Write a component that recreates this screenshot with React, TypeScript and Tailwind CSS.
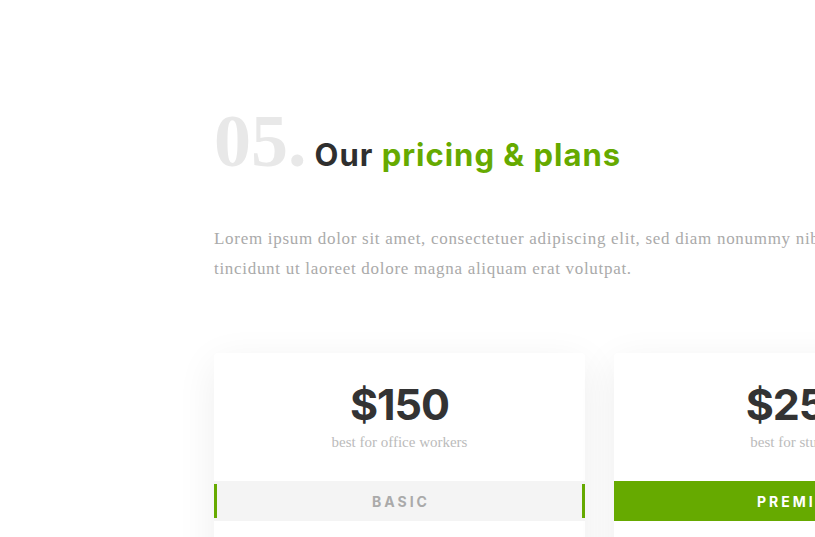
const plans = [
  { price: '$150', note: 'best for office workers', name: 'BASIC', featured: false },
  { price: '$250', note: 'best for students', name: 'PREMIUM', featured: true },
];

const sans = { fontFamily: 'Inter, "Noto Sans", sans-serif' };
const serif = { fontFamily: '"Liberation Serif", serif' };

export default function App() {
  return (
    <div className="w-[815px] h-[537px] overflow-hidden bg-white">
      <div className="w-[1200px] pl-[214px] pt-[104px]">
        <div className="flex items-baseline h-[74px]">
          <span className="text-[74px] leading-none text-[#e8e8e8] font-bold" style={serif}>
            05.
          </span>
          <h2 className="ml-[8px] text-[31px] font-bold tracking-[1px] text-[#2f2f2f]" style={sans}>
            Our <span className="text-[#66aa00]">pricing &amp; plans</span>
          </h2>
        </div>

        <p className="mt-[46px] w-[700px] text-[17px] leading-[30px] tracking-[0.7px] text-[#aaaaaa]" style={serif}>
          Lorem ipsum dolor sit amet, consectetuer adipiscing elit, sed diam nonummy nibh euismod
          tincidunt ut laoreet dolore magna aliquam erat volutpat.
        </p>

        <div className="mt-[69px] flex gap-[29px]">
          {plans.map((p) => (
            <div key={p.name} className="w-[371px] rounded-[4px] bg-white shadow-[0_10px_40px_rgba(0,0,0,0.07)]">
              <div className="pt-[25px] pb-[28px] text-center">
                <div className="text-[43px] leading-[52px] font-bold tracking-[-1px] text-[#333]" style={sans}>
                  {p.price}
                </div>
                <div className="mt-[1px] text-[15px] leading-[22px] text-[#bbbbbb]" style={serif}>
                  {p.note}
                </div>
              </div>
              {p.featured ? (
                <div className="h-[40px] flex items-center justify-center pl-[3px] bg-[#66aa00] text-white text-[14px] font-bold tracking-[3px]" style={sans}>
                  {p.name}
                </div>
              ) : (
                <div className="h-[40px] flex items-center bg-[#f4f4f4]">
                  <span className="w-[3px] h-[34px] bg-[#66aa00]" />
                  <span className="flex-1 text-center pl-[3px] text-[#aaaaaa] text-[14px] font-bold tracking-[3px]" style={sans}>
                    {p.name}
                  </span>
                  <span className="w-[3px] h-[34px] bg-[#66aa00]" />
                </div>
              )}
              <div className="h-[60px]" />
            </div>
          ))}
        </div>
      </div>
    </div>
  );
}
